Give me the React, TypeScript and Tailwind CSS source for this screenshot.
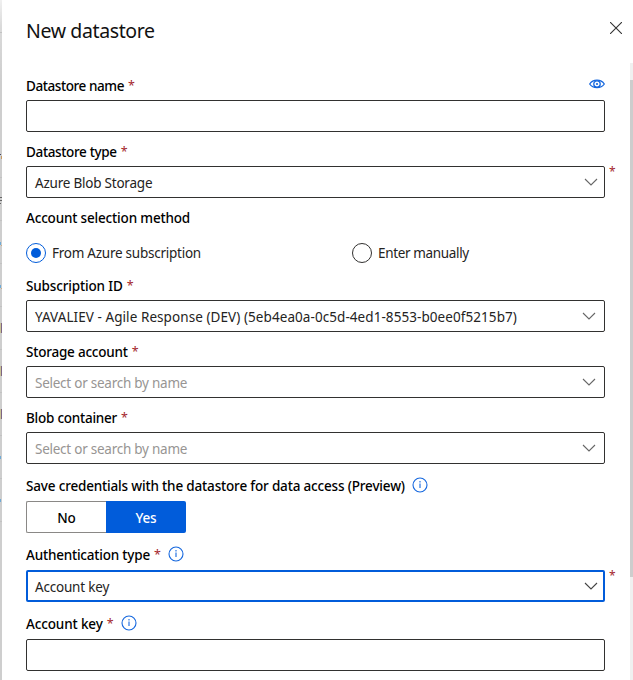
import type { ReactNode } from "react";

const labelText = "text-[13.5px] leading-5 font-medium text-black whitespace-nowrap";

function Star() {
  return <span className="ml-1 h-5 text-[12.5px] leading-5 font-normal text-[#a4262c]">*</span>;
}

function Info() {
  return (
    <svg width="16" height="16" viewBox="0 0 16 16" fill="none" className="mb-[3px] ml-[7px] shrink-0">
      <circle cx="8" cy="8" r="7" stroke="#1567de" strokeWidth="1.1" />
      <path d="M8 6.5V11M8 4V5.5" stroke="#1567de" strokeWidth="1.1" />
    </svg>
  );
}

function Label({ children, required, info, className, text }: { children: ReactNode; required?: boolean; info?: boolean; className: string; text: string }) {
  return (
    <div className={`flex h-5 items-center ${className}`}>
      <span className={`${labelText} ${text}`}>{children}</span>
      {required && <Star />}
      {info && <Info />}
    </div>
  );
}

function Chevron({ color }: { color: string }) {
  return (
    <svg width="14" height="8" viewBox="0 0 14 8" fill="none" className="shrink-0">
      <path d="M1 1L7 7L13 1" stroke={color} strokeWidth="1.1" />
    </svg>
  );
}

function Input() {
  return <div className="h-8 w-[579px] shrink-0 rounded-[2px] border border-[#323130]" />;
}

function Select({ children, placeholder, focused, star, text }: { children: ReactNode; placeholder?: boolean; focused?: boolean; star?: boolean; text: string }) {
  return (
    <div className="flex h-8 shrink-0">
      <div
        className={`flex h-8 w-[579px] items-center justify-between rounded-[2px] ${
          focused ? "border-2 border-[#015cda] pr-[5px] pl-[7px]" : star ? "border border-[#323130] pr-[6px] pl-2" : "border border-[#323130] pr-2 pl-2"
        }`}
      >
        <span className={`mt-[2px] text-[13.5px] leading-5 whitespace-nowrap ${placeholder ? "text-[#979593]" : "text-[#242322]"} ${text}`}>{children}</span>
        <Chevron color={focused ? "#444" : "#666"} />
      </div>
      {star && <span className="-mt-1 ml-1 text-[12px] leading-5 text-[#a4262c]">*</span>}
    </div>
  );
}

const rules = [32, 177, 220, 263, 306, 349, 392, 435, 478, 521];
const blues = [242, 285, 456, 499];
const purples = [323, 366, 409];

function PageEdge() {
  return (
    <svg width="2" height="680" className="shrink-0">
      <defs>
        <linearGradient id="edge" x1="0" y1="0" x2="0" y2="1">
          <stop offset="0" stopColor="#f0f0f0" />
          <stop offset="0.04" stopColor="#dadada" />
          <stop offset="0.12" stopColor="#cecece" />
          <stop offset="1" stopColor="#cecece" />
        </linearGradient>
      </defs>
      <rect width="2" height="680" fill="url(#edge)" />
      {rules.map((y) => <rect key={y} y={y} width="2" height="1" fill="#c2c2c2" />)}
      {blues.map((y) => <rect key={y} y={y} width="1" height="3" fill="#6faad5" />)}
      {purples.map((y) => (
        <g key={y}>
          <rect y={y} width="1" height="10" fill="#c9c295" />
          <rect x="1" y={y} width="1" height="10" fill="#7d6685" />
        </g>
      ))}
      <rect y="154" width="1" height="1" fill="#45455f" />
      <rect x="1" y="156" width="1" height="3" fill="#c79a62" />
      <rect y="197" width="2" height="1" fill="#666" />
      <rect y="200" width="2" height="1" fill="#666" />
      <rect y="203" width="1" height="1" fill="#666" />
      <rect x="1" y="245" width="1" height="1" fill="#c9ad8a" />
      <rect x="1" y="288" width="1" height="1" fill="#c9ad8a" />
    </svg>
  );
}

export default function App() {
  return (
    <div className="flex h-[680px] w-[633px] overflow-hidden bg-white font-['Noto_Sans','Open_Sans',sans-serif]">
      <PageEdge />
      <div className="flex flex-1 flex-col">
        <header className="flex h-[63px] shrink-0 items-start justify-between pr-[11px] pl-6">
          <h1 className="mt-[17px] text-[19.5px] leading-7 tracking-[-0.38px] whitespace-nowrap text-[#111]">New datastore</h1>
          <svg width="12" height="12" viewBox="0 0 12 12" fill="none" className="mt-[22px]">
            <path d="M0 0L12 12M12 0L0 12" stroke="#333" strokeWidth="1.1" />
          </svg>
        </header>
        <div className="flex min-h-0 flex-1 justify-between">
          <main className="flex flex-col pt-[13px] pl-6">
            <div className="mb-1 flex h-5 w-[579px] shrink-0 items-center justify-between">
              <Label required className="" text="tracking-[-0.42px]">Datastore name</Label>
              <svg width="16" height="10" viewBox="0 0 16 10" fill="none" className="mb-1">
                <path d="M0.7 5C4 -0.2 12 -0.2 15.3 5C12 9.8 4 9.8 0.7 5Z" stroke="#1567de" strokeWidth="1.3" />
                <circle cx="8" cy="5" r="3.2" stroke="#1567de" strokeWidth="1.3" />
                <circle cx="8" cy="5" r="1.1" fill="#1567de" />
              </svg>
            </div>
            <Input />
            <Label required className="mt-[10px] mb-1 shrink-0" text="tracking-[-0.35px]">Datastore type</Label>
            <Select star text="tracking-[-0.22px]">Azure Blob Storage</Select>
            <Label className="mt-[10px] shrink-0" text="tracking-[-0.17px]">Account selection method</Label>
            <div className="mt-[15px] grid h-5 shrink-0 grid-cols-[326px_1fr]">
              <div className="flex items-center gap-1.5">
                <span className="flex size-5 items-center justify-center rounded-full border border-[#015cda]">
                  <span className="size-2.5 rounded-full bg-[#015cda]" />
                </span>
                <span className="text-[13.5px] leading-5 tracking-[-0.25px] text-[#242322]">From Azure subscription</span>
              </div>
              <div className="flex items-center gap-1.5">
                <span className="size-5 rounded-full border border-[#323130]" />
                <span className="text-[13.5px] leading-5 tracking-[-0.35px] text-[#242322]">Enter manually</span>
              </div>
            </div>
            <Label required className="mt-[13px] mb-1 shrink-0" text="tracking-[-0.15px]">Subscription ID</Label>
            <Select text="tracking-[0.07px]">YAVALIEV - Agile Response (DEV) (5eb4ea0a-0c5d-4ed1-8553-b0ee0f5215b7)</Select>
            <Label required className="mt-[10px] mb-1 shrink-0" text="tracking-[-0.22px]">Storage account</Label>
            <Select placeholder text="tracking-[-0.25px]">Select or search by name</Select>
            <Label required className="mt-[10px] mb-1 shrink-0" text="tracking-[-0.24px]">Blob container</Label>
            <Select placeholder text="tracking-[-0.25px]">Select or search by name</Select>
            <Label info className="mt-3 mb-[5px] shrink-0" text="tracking-[-0.17px]">Save credentials with the datastore for data access (Preview)</Label>
            <div className="flex h-8 shrink-0 text-[13.5px] font-medium">
              <button className="h-8 w-20 rounded-l-[2px] border border-r-0 border-[#8a8886] pt-[2px] text-black">No</button>
              <button className="h-8 w-20 rounded-r-[2px] bg-[#015cda] pt-[2px] tracking-[-0.2px] text-white">Yes</button>
            </div>
            <Label required info className="mt-3 mb-[5px] shrink-0" text="tracking-[-0.2px]">Authentication type</Label>
            <Select focused star text="tracking-[-0.2px]">Account key</Select>
            <Label required info className="mt-3 mb-[5px] shrink-0" text="tracking-[-0.13px]">Account key</Label>
            <Input />
          </main>
          <div className="w-[3px] bg-[#f0f0f0] pt-[17px]">
            <div className="h-[497px] bg-[#cdcdcd]" />
          </div>
        </div>
      </div>
    </div>
  );
}
